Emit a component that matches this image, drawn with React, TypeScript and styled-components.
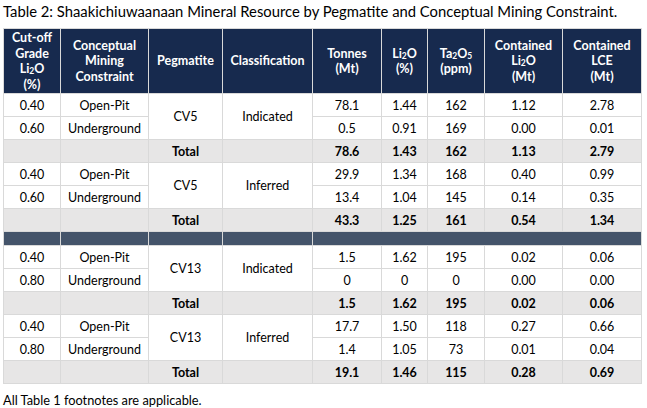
import React from "react";
import styled, { createGlobalStyle } from "styled-components";

const GlobalStyle = createGlobalStyle`
  html, body {
    margin: 0;
    padding: 0;
    background: #ffffff;
  }
`;

const Page = styled.div`
  width: 647px;
  height: 408px;
  padding: 2px 0 0 3px;
  box-sizing: border-box;
  background: #fff;
`;

const Title = styled.div`
  font-family: "Lato", "Liberation Sans", sans-serif;
  font-size: 14.8px;
  line-height: 18px;
  color: #000;
  height: 26px;
`;

const Table = styled.table`
  border-collapse: collapse;
  table-layout: fixed;
  width: 638px;
  font-family: "Lato", "Liberation Sans", sans-serif;
  font-size: 12.5px;
  color: #000;
`;

const HeadRow = styled.tr`
  height: 65px;
`;

const HeadCell = styled.th`
  background: #172a4e;
  color: #fff;
  font-weight: 700;
  font-size: 12.5px;
  line-height: 15.5px;
  text-align: center;
  vertical-align: middle;
  padding: 0 2px;
  border: 1px solid #d9d9d9;
`;

const Row = styled.tr<{ $total?: boolean }>`
  height: 23px;
  background: ${(p) => (p.$total ? "#e7e6e6" : "#fff")};
`;

const Cell = styled.td<{ $bold?: boolean }>`
  text-align: center;
  vertical-align: middle;
  padding: 0;
  line-height: 15px;
  font-weight: ${(p) => (p.$bold ? 700 : 400)};
  border: 1px solid #d9d9d9;
`;

const SepRow = styled.tr`
  height: 14px;
  background: #44546a;
`;

const SepCell = styled.td`
  padding: 0;
  border: 1px solid #d9d9d9;
`;

const Sub = styled.span`
  font-size: 0.68em;
  vertical-align: -1px;
  line-height: 0;
`;

const Footnote = styled.div`
  font-family: "Lato", "Liberation Sans", sans-serif;
  font-size: 12.8px;
  line-height: 16px;
  color: #000;
  margin-top: 8px;
`;

const widths = [57, 88, 74, 90, 69, 46, 57, 78, 79];

type Line = { grade: string; constraint: string; vals: string[] };
type Block = { peg: string; cls: string; lines: Line[]; total: string[] };

const blocksA: Block[] = [
  {
    peg: "CV5",
    cls: "Indicated",
    lines: [
      { grade: "0.40", constraint: "Open-Pit", vals: ["78.1", "1.44", "162", "1.12", "2.78"] },
      { grade: "0.60", constraint: "Underground", vals: ["0.5", "0.91", "169", "0.00", "0.01"] },
    ],
    total: ["78.6", "1.43", "162", "1.13", "2.79"],
  },
  {
    peg: "CV5",
    cls: "Inferred",
    lines: [
      { grade: "0.40", constraint: "Open-Pit", vals: ["29.9", "1.34", "168", "0.40", "0.99"] },
      { grade: "0.60", constraint: "Underground", vals: ["13.4", "1.04", "145", "0.14", "0.35"] },
    ],
    total: ["43.3", "1.25", "161", "0.54", "1.34"],
  },
];

const blocksB: Block[] = [
  {
    peg: "CV13",
    cls: "Indicated",
    lines: [
      { grade: "0.40", constraint: "Open-Pit", vals: ["1.5", "1.62", "195", "0.02", "0.06"] },
      { grade: "0.80", constraint: "Underground", vals: ["0", "0", "0", "0.00", "0.00"] },
    ],
    total: ["1.5", "1.62", "195", "0.02", "0.06"],
  },
  {
    peg: "CV13",
    cls: "Inferred",
    lines: [
      { grade: "0.40", constraint: "Open-Pit", vals: ["17.7", "1.50", "118", "0.27", "0.66"] },
      { grade: "0.80", constraint: "Underground", vals: ["1.4", "1.05", "73", "0.01", "0.04"] },
    ],
    total: ["19.1", "1.46", "115", "0.28", "0.69"],
  },
];

const Li2O = () => (
  <>
    Li<Sub>2</Sub>O
  </>
);

const BlockRows = ({ block }: { block: Block }) => (
  <>
    {block.lines.map((line, i) => (
      <Row key={i}>
        <Cell>{line.grade}</Cell>
        <Cell>{line.constraint}</Cell>
        {i === 0 && (
          <>
            <Cell rowSpan={block.lines.length}>{block.peg}</Cell>
            <Cell rowSpan={block.lines.length}>{block.cls}</Cell>
          </>
        )}
        {line.vals.map((v, j) => (
          <Cell key={j}>{v}</Cell>
        ))}
      </Row>
    ))}
    <Row $total>
      <Cell />
      <Cell />
      <Cell $bold>Total</Cell>
      <Cell />
      {block.total.map((v, j) => (
        <Cell key={j} $bold>
          {v}
        </Cell>
      ))}
    </Row>
  </>
);

export default function App() {
  return (
    <Page>
      <GlobalStyle />
      <Title>
        Table 2: Shaakichiuwaanaan Mineral Resource by Pegmatite and Conceptual Mining Constraint.
      </Title>
      <Table>
        <colgroup>
          {widths.map((w, i) => (
            <col key={i} style={{ width: w }} />
          ))}
        </colgroup>
        <thead>
          <HeadRow>
            <HeadCell>
              Cut-off
              <br />
              Grade
              <br />
              <Li2O />
              <br />
              (%)
            </HeadCell>
            <HeadCell>
              Conceptual
              <br />
              Mining
              <br />
              Constraint
            </HeadCell>
            <HeadCell>Pegmatite</HeadCell>
            <HeadCell>Classification</HeadCell>
            <HeadCell>
              Tonnes
              <br />
              (Mt)
            </HeadCell>
            <HeadCell>
              <Li2O />
              <br />
              (%)
            </HeadCell>
            <HeadCell>
              Ta<Sub>2</Sub>O<Sub>5</Sub>
              <br />
              (ppm)
            </HeadCell>
            <HeadCell>
              Contained
              <br />
              <Li2O />
              <br />
              (Mt)
            </HeadCell>
            <HeadCell>
              Contained
              <br />
              LCE
              <br />
              (Mt)
            </HeadCell>
          </HeadRow>
        </thead>
        <tbody>
          {blocksA.map((b, i) => (
            <BlockRows key={i} block={b} />
          ))}
          <SepRow>
            <SepCell />
            <SepCell />
            <SepCell />
            <SepCell />
            <SepCell colSpan={5} />
          </SepRow>
          {blocksB.map((b, i) => (
            <BlockRows key={i} block={b} />
          ))}
        </tbody>
      </Table>
      <Footnote>All Table 1 footnotes are applicable.</Footnote>
    </Page>
  );
}
